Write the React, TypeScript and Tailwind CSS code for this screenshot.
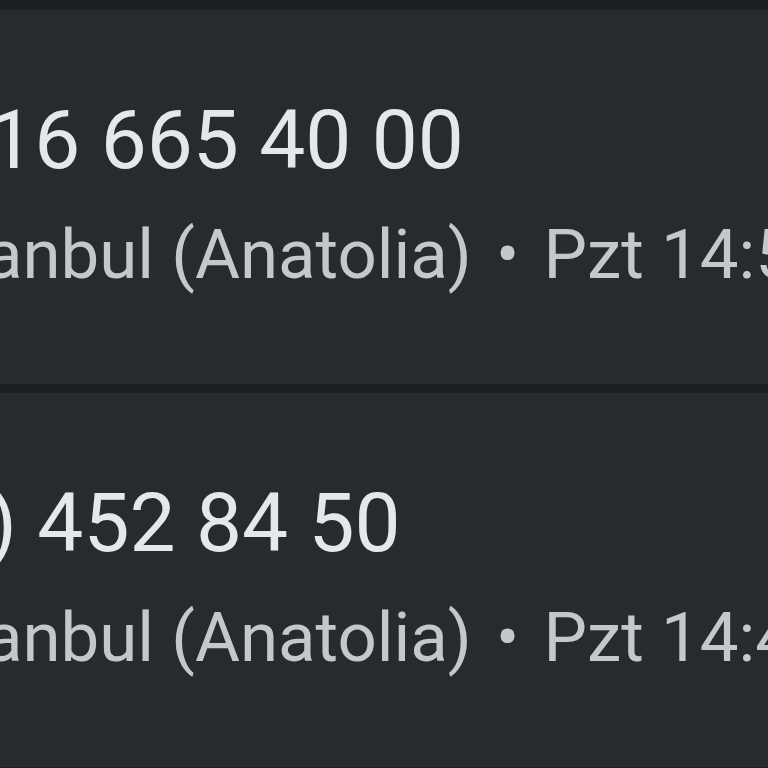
import React from 'react';

type CallEntry = {
  number: string;
  numberOffset: string;
  place: string;
  time: string;
};

const calls: CallEntry[] = [
  { number: '0216 665 40 00', numberOffset: '-ml-[104px]', place: 'İstanbul (Anatolia)', time: 'Pzt 14:52' },
  { number: '(0216) 452 84 50', numberOffset: '-ml-[224px]', place: 'İstanbul (Anatolia)', time: 'Pzt 14:47' },
];

const CallRow: React.FC<{ call: CallEntry }> = ({ call }) => (
  <div className="bg-[#272a2f] h-[374px] overflow-hidden pt-[89px]">
    <div className={`whitespace-nowrap text-[82px] leading-none text-[#e6e7e9] ${call.numberOffset}`}>
      {call.number}
    </div>
    <div className="whitespace-nowrap text-[69px] leading-none text-[#c5c7ca] mt-[39px] -ml-[92px]">
      {call.place} <span className="px-[7px]">•</span> {call.time}
    </div>
  </div>
);

export default function App() {
  return (
    <div className="w-[768px] h-[768px] overflow-hidden bg-[#1d1f23] font-['Roboto',sans-serif] flex flex-col">
      {/* status / header strip */}
      <div className="h-[10px] shrink-0 bg-[#1d1f23]" />
      <CallRow call={calls[0]} />
      <div className="h-[9px] shrink-0 bg-[#1d1f23]" />
      <CallRow call={calls[1]} />
    </div>
  );
}
